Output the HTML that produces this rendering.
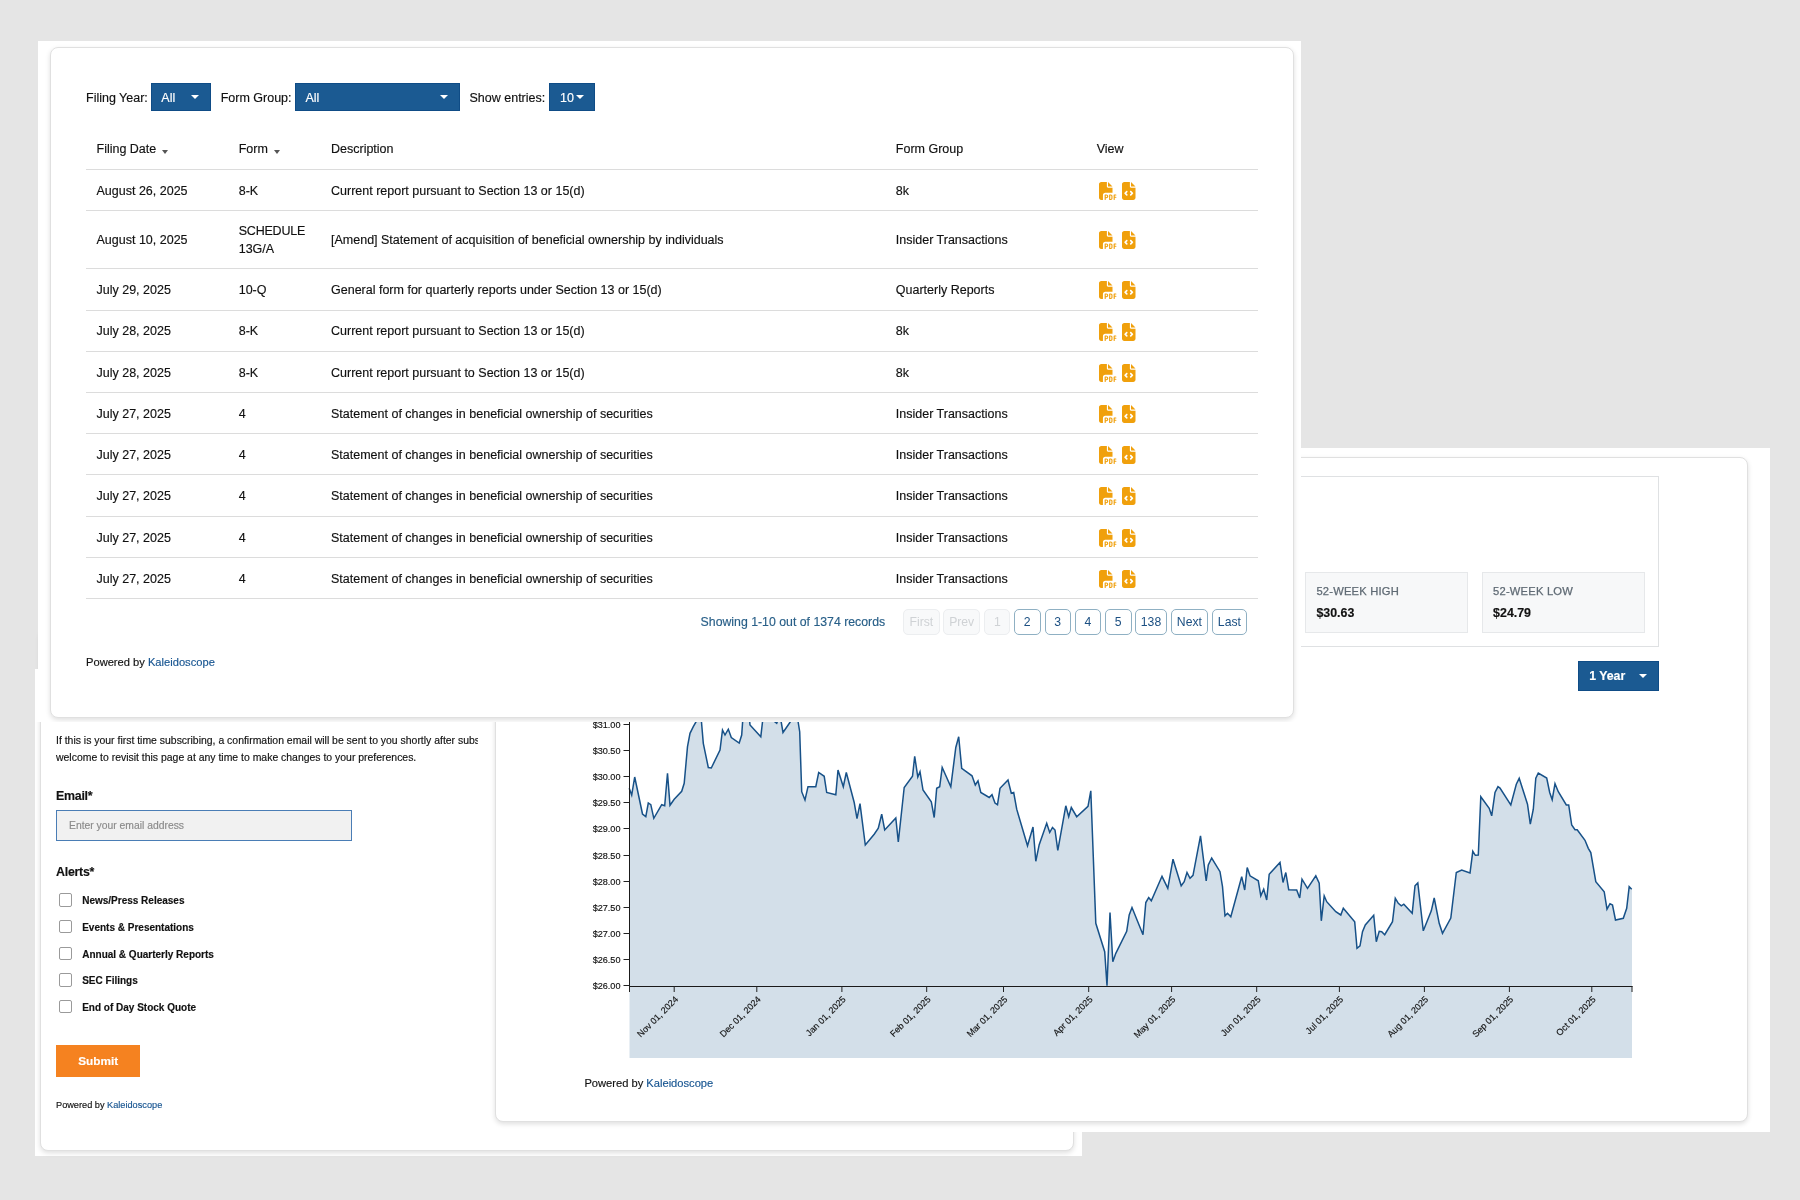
<!DOCTYPE html>
<html><head><meta charset="utf-8"><style>
html,body{margin:0;padding:0;}
body{will-change:transform;width:1800px;height:1200px;background:#e5e5e5;position:relative;overflow:hidden;font-family:"Liberation Sans",sans-serif;}
.panel{position:absolute;background:#fff;}
.card{position:absolute;box-sizing:border-box;border:1px solid #e0e0e0;border-radius:8px;background:#fff;box-shadow:0 2px 5px rgba(0,0,0,0.13);}
.t{position:absolute;white-space:nowrap;line-height:1;-webkit-text-stroke:0.15px currentColor;}
.sel{position:absolute;height:28px;background:#1b5a92;box-sizing:border-box;border:1px solid #0f4c86;}
.caret{position:absolute;width:0;height:0;border-left:4px solid transparent;border-right:4px solid transparent;border-top:4.6px solid #fff;}
.scaret{position:absolute;width:0;height:0;border-left:3.3px solid transparent;border-right:3.3px solid transparent;border-top:4px solid #555;}
.pg{position:absolute;height:24.2px;border-radius:5px;font-size:12.2px;line-height:25.2px;text-align:center;}
</style></head><body>
<div class="panel" style="left:35px;top:669px;width:1047px;height:487px;z-index:1">
<div class="card" style="left:5.3px;top:-40px;width:1033.3px;height:522.3px"></div>
<div class="t" style="left:21px;top:66.55px;font-size:10.45px;color:#111;font-weight:normal;">If this is your first time subscribing, a confirmation email will be sent to you shortly after subscribing. You are</div>
<div class="t" style="left:21px;top:83.75px;font-size:10.45px;color:#111;font-weight:normal;">welcome to revisit this page at any time to make changes to your preferences.</div>
<div class="t" style="left:21px;top:120.70px;font-size:12.4px;color:#111;font-weight:bold;letter-spacing:-0.25px">Email*</div>
<div style="position:absolute;left:21px;top:141px;width:294px;height:29px;border:1px solid #4a7db5;background:#f1f1f1"></div>
<div class="t" style="left:34px;top:152.14px;font-size:10.35px;color:#8a8a8a;font-weight:normal;">Enter your email address</div>
<div class="t" style="left:21px;top:196.80px;font-size:12.4px;color:#111;font-weight:bold;letter-spacing:-0.25px">Alerts*</div>
<div style="position:absolute;left:24.1px;top:224.2px;width:11.2px;height:11.4px;border:1.1px solid #9a9a9a;border-radius:2px;background:#fff"></div>
<div class="t" style="left:47.2px;top:227.34px;font-size:10.0px;color:#111;font-weight:bold;">News/Press Releases</div>
<div style="position:absolute;left:24.1px;top:250.9px;width:11.2px;height:11.4px;border:1.1px solid #9a9a9a;border-radius:2px;background:#fff"></div>
<div class="t" style="left:47.2px;top:254.01px;font-size:10.0px;color:#111;font-weight:bold;">Events &amp; Presentations</div>
<div style="position:absolute;left:24.1px;top:277.5px;width:11.2px;height:11.4px;border:1.1px solid #9a9a9a;border-radius:2px;background:#fff"></div>
<div class="t" style="left:47.2px;top:280.68px;font-size:10.0px;color:#111;font-weight:bold;">Annual &amp; Quarterly Reports</div>
<div style="position:absolute;left:24.1px;top:304.2px;width:11.2px;height:11.4px;border:1.1px solid #9a9a9a;border-radius:2px;background:#fff"></div>
<div class="t" style="left:47.2px;top:307.35px;font-size:10.0px;color:#111;font-weight:bold;">SEC Filings</div>
<div style="position:absolute;left:24.1px;top:330.9px;width:11.2px;height:11.4px;border:1.1px solid #9a9a9a;border-radius:2px;background:#fff"></div>
<div class="t" style="left:47.2px;top:334.02px;font-size:10.0px;color:#111;font-weight:bold;">End of Day Stock Quote</div>
<div style="position:absolute;left:21px;top:376px;width:84px;height:31.5px;background:#f58220"></div>
<div class="t" style="left:43.2px;top:386.81px;font-size:11.8px;color:#fff;font-weight:bold;">Submit</div>
<div class="t" style="left:21px;top:431.61px;font-size:9.2px;color:#111;font-weight:normal;">Powered by <span style="color:#175591">Kaleidoscope</span></div>
</div>
<div class="panel" style="left:478px;top:448px;width:1292px;height:684px;z-index:2">
<div class="card" style="left:17px;top:9px;width:1253px;height:665px"></div>
<div style="position:absolute;left:52px;top:28px;width:1126.5px;height:169px;border:1px solid #dfe1e3"></div>
<div style="position:absolute;left:827px;top:124px;width:161px;height:59px;border:1px solid #e6e8ea;background:#f7f8f9"></div>
<div class="t" style="left:838.4000000000001px;top:137.82px;font-size:11.2px;color:#5f6a74;font-weight:normal;letter-spacing:0.2px;-webkit-text-stroke:0.25px #5f6a74">52-WEEK HIGH</div>
<div class="t" style="left:838.4000000000001px;top:158.70px;font-size:12.4px;color:#111;font-weight:bold;">$30.63</div>
<div style="position:absolute;left:1003.7px;top:124px;width:161px;height:59px;border:1px solid #e6e8ea;background:#f7f8f9"></div>
<div class="t" style="left:1015.1000000000001px;top:137.82px;font-size:11.2px;color:#5f6a74;font-weight:normal;letter-spacing:0.2px;-webkit-text-stroke:0.25px #5f6a74">52-WEEK LOW</div>
<div class="t" style="left:1015.1000000000001px;top:158.70px;font-size:12.4px;color:#111;font-weight:bold;">$24.79</div>
<div style="position:absolute;left:1100px;top:213px;width:80.5px;height:29.6px;background:#1b5a92;box-sizing:border-box;border:1px solid #0f4c86"></div>
<div class="t" style="left:1111.2px;top:222.49px;font-size:12.3px;color:#fff;font-weight:bold;">1 Year</div>
<div class="caret" style="left:1161px;top:226px"></div>
<svg style="position:absolute;left:0;top:0" width="1292" height="684">
<polygon points="151.5,610 151.5,340.3 151.2,340.3 153.7,347.0 156.7,329.0 164.5,366.0 167.8,368.7 170.3,355.0 172.8,356.7 175.8,370.3 183.7,356.7 186.7,357.8 189.5,325.3 192.0,357.3 196.2,351.2 203.7,343.3 206.2,335.3 209.5,298.7 212.0,285.3 215.3,278.7 220.3,270.0 222.8,266.0 225.3,295.3 230.3,319.5 233.3,320.0 242.0,302.0 244.5,282.0 247.0,287.0 250.3,281.2 253.3,289.5 261.2,295.0 263.7,287.0 265.3,264.0 271.2,268.0 272.0,277.0 282.8,288.7 285.3,267.0 292.0,270.0 298.7,275.3 302.0,267.0 305.0,284.5 317.0,267.0 319.5,270.0 321.7,283.7 323.7,343.7 327.0,352.0 330.0,338.7 337.8,338.7 340.7,324.5 346.2,328.3 348.7,344.5 357.8,346.7 360.0,322.0 365.3,338.7 368.3,324.5 376.2,354.5 379.0,370.7 382.0,355.7 387.3,397.0 396.2,386.2 400.3,380.3 403.7,366.2 406.7,382.0 417.8,370.0 420.3,394.0 426.2,339.5 434.5,328.3 436.7,308.3 439.8,329.0 442.0,323.7 445.0,342.0 453.3,353.7 456.2,369.5 458.7,340.3 461.7,338.7 464.2,319.5 472.8,338.7 477.8,299.5 480.7,288.7 483.7,320.3 494.0,327.8 497.3,337.0 500.0,332.8 502.8,344.5 511.2,349.5 514.0,346.7 517.0,355.0 519.5,356.7 522.0,340.3 530.0,332.0 533.3,345.3 535.7,344.5 538.7,361.2 549.5,397.8 555.0,379.0 557.8,413.3 561.2,396.7 568.7,375.3 571.7,384.5 574.5,379.5 577.0,382.0 579.8,402.3 587.8,357.8 590.7,368.7 593.3,359.5 598.7,368.7 610.0,358.3 612.8,342.8 617.8,475.3 626.7,503.7 629.0,537.8 632.0,464.5 634.8,513.7 637.8,505.3 648.7,483.3 651.2,467.0 654.0,459.5 665.0,486.7 667.8,454.5 670.7,449.5 673.3,452.8 684.0,428.3 689.8,440.3 695.0,411.2 703.2,437.8 706.2,433.7 709.0,424.5 712.0,430.3 715.0,427.3 722.5,387.8 728.2,432.8 730.3,417.0 733.7,410.0 742.0,423.7 744.5,438.7 747.0,467.8 749.5,465.3 752.8,468.7 763.7,428.7 766.7,442.0 769.2,419.5 772.0,427.8 780.3,432.8 782.8,447.8 785.7,441.2 788.7,452.0 791.2,426.2 802.0,414.5 805.0,434.5 807.8,424.5 810.7,441.7 818.7,442.0 821.7,450.0 824.0,431.2 829.5,440.3 837.8,427.8 841.2,435.3 843.3,472.8 846.2,447.8 848.7,453.7 857.8,463.7 862.8,467.0 865.3,460.3 876.7,473.7 879.0,500.3 882.0,497.8 884.5,483.7 887.3,477.0 895.7,467.3 898.3,493.7 901.2,483.3 903.7,483.7 906.7,486.7 914.5,473.7 917.3,450.3 920.3,455.3 923.3,457.8 925.8,456.2 934.2,465.3 937.0,437.8 939.8,435.0 945.3,482.8 953.3,462.8 956.2,450.0 961.2,475.3 964.5,485.3 972.8,470.0 978.3,424.5 983.7,422.0 992.0,425.0 994.8,403.3 997.3,407.3 1000.3,407.0 1002.8,348.7 1011.2,360.3 1013.7,367.8 1017.0,344.5 1020.0,338.7 1022.0,340.0 1032.8,357.0 1038.3,336.2 1041.2,330.3 1049.5,356.2 1052.3,376.2 1055.3,361.2 1057.8,330.3 1060.3,325.0 1068.7,330.0 1071.7,344.5 1074.2,351.7 1077.0,335.7 1080.3,343.7 1088.3,357.0 1090.7,357.0 1093.7,377.0 1097.0,381.7 1099.2,381.7 1107.0,392.3 1110.3,400.3 1112.8,404.5 1117.8,433.7 1126.2,443.7 1129.0,461.2 1132.0,455.7 1134.5,457.0 1137.5,472.0 1145.3,470.3 1148.7,460.3 1151.2,438.7 1153.7,441.2 1154.0,441.2 1154.0,610" fill="#d3dfe9"/>
<polyline points="151.2,340.3 153.7,347.0 156.7,329.0 164.5,366.0 167.8,368.7 170.3,355.0 172.8,356.7 175.8,370.3 183.7,356.7 186.7,357.8 189.5,325.3 192.0,357.3 196.2,351.2 203.7,343.3 206.2,335.3 209.5,298.7 212.0,285.3 215.3,278.7 220.3,270.0 222.8,266.0 225.3,295.3 230.3,319.5 233.3,320.0 242.0,302.0 244.5,282.0 247.0,287.0 250.3,281.2 253.3,289.5 261.2,295.0 263.7,287.0 265.3,264.0 271.2,268.0 272.0,277.0 282.8,288.7 285.3,267.0 292.0,270.0 298.7,275.3 302.0,267.0 305.0,284.5 317.0,267.0 319.5,270.0 321.7,283.7 323.7,343.7 327.0,352.0 330.0,338.7 337.8,338.7 340.7,324.5 346.2,328.3 348.7,344.5 357.8,346.7 360.0,322.0 365.3,338.7 368.3,324.5 376.2,354.5 379.0,370.7 382.0,355.7 387.3,397.0 396.2,386.2 400.3,380.3 403.7,366.2 406.7,382.0 417.8,370.0 420.3,394.0 426.2,339.5 434.5,328.3 436.7,308.3 439.8,329.0 442.0,323.7 445.0,342.0 453.3,353.7 456.2,369.5 458.7,340.3 461.7,338.7 464.2,319.5 472.8,338.7 477.8,299.5 480.7,288.7 483.7,320.3 494.0,327.8 497.3,337.0 500.0,332.8 502.8,344.5 511.2,349.5 514.0,346.7 517.0,355.0 519.5,356.7 522.0,340.3 530.0,332.0 533.3,345.3 535.7,344.5 538.7,361.2 549.5,397.8 555.0,379.0 557.8,413.3 561.2,396.7 568.7,375.3 571.7,384.5 574.5,379.5 577.0,382.0 579.8,402.3 587.8,357.8 590.7,368.7 593.3,359.5 598.7,368.7 610.0,358.3 612.8,342.8 617.8,475.3 626.7,503.7 629.0,537.8 632.0,464.5 634.8,513.7 637.8,505.3 648.7,483.3 651.2,467.0 654.0,459.5 665.0,486.7 667.8,454.5 670.7,449.5 673.3,452.8 684.0,428.3 689.8,440.3 695.0,411.2 703.2,437.8 706.2,433.7 709.0,424.5 712.0,430.3 715.0,427.3 722.5,387.8 728.2,432.8 730.3,417.0 733.7,410.0 742.0,423.7 744.5,438.7 747.0,467.8 749.5,465.3 752.8,468.7 763.7,428.7 766.7,442.0 769.2,419.5 772.0,427.8 780.3,432.8 782.8,447.8 785.7,441.2 788.7,452.0 791.2,426.2 802.0,414.5 805.0,434.5 807.8,424.5 810.7,441.7 818.7,442.0 821.7,450.0 824.0,431.2 829.5,440.3 837.8,427.8 841.2,435.3 843.3,472.8 846.2,447.8 848.7,453.7 857.8,463.7 862.8,467.0 865.3,460.3 876.7,473.7 879.0,500.3 882.0,497.8 884.5,483.7 887.3,477.0 895.7,467.3 898.3,493.7 901.2,483.3 903.7,483.7 906.7,486.7 914.5,473.7 917.3,450.3 920.3,455.3 923.3,457.8 925.8,456.2 934.2,465.3 937.0,437.8 939.8,435.0 945.3,482.8 953.3,462.8 956.2,450.0 961.2,475.3 964.5,485.3 972.8,470.0 978.3,424.5 983.7,422.0 992.0,425.0 994.8,403.3 997.3,407.3 1000.3,407.0 1002.8,348.7 1011.2,360.3 1013.7,367.8 1017.0,344.5 1020.0,338.7 1022.0,340.0 1032.8,357.0 1038.3,336.2 1041.2,330.3 1049.5,356.2 1052.3,376.2 1055.3,361.2 1057.8,330.3 1060.3,325.0 1068.7,330.0 1071.7,344.5 1074.2,351.7 1077.0,335.7 1080.3,343.7 1088.3,357.0 1090.7,357.0 1093.7,377.0 1097.0,381.7 1099.2,381.7 1107.0,392.3 1110.3,400.3 1112.8,404.5 1117.8,433.7 1126.2,443.7 1129.0,461.2 1132.0,455.7 1134.5,457.0 1137.5,472.0 1145.3,470.3 1148.7,460.3 1151.2,438.7 1153.7,441.2" fill="none" stroke="#175188" stroke-width="1.5" stroke-linejoin="miter"/>
<line x1="151.5" y1="270" x2="151.5" y2="539" stroke="#1a1a1a" stroke-width="1"/>
<line x1="145.5" y1="276.5" x2="151.5" y2="276.5" stroke="#222" stroke-width="1"/>
<text x="142.5" y="279.7" text-anchor="end" font-family="Liberation Sans" font-size="9.1" fill="#111" stroke="#111" stroke-width="0.15">$31.00</text>
<line x1="145.5" y1="302.5" x2="151.5" y2="302.5" stroke="#222" stroke-width="1"/>
<text x="142.5" y="305.7" text-anchor="end" font-family="Liberation Sans" font-size="9.1" fill="#111" stroke="#111" stroke-width="0.15">$30.50</text>
<line x1="145.5" y1="328.5" x2="151.5" y2="328.5" stroke="#222" stroke-width="1"/>
<text x="142.5" y="331.7" text-anchor="end" font-family="Liberation Sans" font-size="9.1" fill="#111" stroke="#111" stroke-width="0.15">$30.00</text>
<line x1="145.5" y1="354.5" x2="151.5" y2="354.5" stroke="#222" stroke-width="1"/>
<text x="142.5" y="357.7" text-anchor="end" font-family="Liberation Sans" font-size="9.1" fill="#111" stroke="#111" stroke-width="0.15">$29.50</text>
<line x1="145.5" y1="380.5" x2="151.5" y2="380.5" stroke="#222" stroke-width="1"/>
<text x="142.5" y="383.7" text-anchor="end" font-family="Liberation Sans" font-size="9.1" fill="#111" stroke="#111" stroke-width="0.15">$29.00</text>
<line x1="145.5" y1="407.5" x2="151.5" y2="407.5" stroke="#222" stroke-width="1"/>
<text x="142.5" y="410.7" text-anchor="end" font-family="Liberation Sans" font-size="9.1" fill="#111" stroke="#111" stroke-width="0.15">$28.50</text>
<line x1="145.5" y1="433.5" x2="151.5" y2="433.5" stroke="#222" stroke-width="1"/>
<text x="142.5" y="436.7" text-anchor="end" font-family="Liberation Sans" font-size="9.1" fill="#111" stroke="#111" stroke-width="0.15">$28.00</text>
<line x1="145.5" y1="459.5" x2="151.5" y2="459.5" stroke="#222" stroke-width="1"/>
<text x="142.5" y="462.7" text-anchor="end" font-family="Liberation Sans" font-size="9.1" fill="#111" stroke="#111" stroke-width="0.15">$27.50</text>
<line x1="145.5" y1="485.5" x2="151.5" y2="485.5" stroke="#222" stroke-width="1"/>
<text x="142.5" y="488.7" text-anchor="end" font-family="Liberation Sans" font-size="9.1" fill="#111" stroke="#111" stroke-width="0.15">$27.00</text>
<line x1="145.5" y1="511.5" x2="151.5" y2="511.5" stroke="#222" stroke-width="1"/>
<text x="142.5" y="514.7" text-anchor="end" font-family="Liberation Sans" font-size="9.1" fill="#111" stroke="#111" stroke-width="0.15">$26.50</text>
<line x1="145.5" y1="537.5" x2="151.5" y2="537.5" stroke="#222" stroke-width="1"/>
<text x="142.5" y="540.7" text-anchor="end" font-family="Liberation Sans" font-size="9.1" fill="#111" stroke="#111" stroke-width="0.15">$26.00</text>
<line x1="151.5" y1="538.5" x2="1154.5" y2="538.5" stroke="#1a1a1a" stroke-width="1"/>
<line x1="1154" y1="538" x2="1154" y2="544" stroke="#222" stroke-width="1"/>
<line x1="151.5" y1="538" x2="151.5" y2="544" stroke="#222" stroke-width="1"/>
<line x1="196.2" y1="538" x2="196.2" y2="544" stroke="#222" stroke-width="1"/>
<text transform="translate(200.7,552) rotate(-45)" text-anchor="end" font-family="Liberation Sans" font-size="9.0" fill="#111" stroke="#111" stroke-width="0.15">Nov 01, 2024</text>
<line x1="278.8" y1="538" x2="278.8" y2="544" stroke="#222" stroke-width="1"/>
<text transform="translate(283.3,552) rotate(-45)" text-anchor="end" font-family="Liberation Sans" font-size="9.0" fill="#111" stroke="#111" stroke-width="0.15">Dec 01, 2024</text>
<line x1="363.9" y1="538" x2="363.9" y2="544" stroke="#222" stroke-width="1"/>
<text transform="translate(368.4,552) rotate(-45)" text-anchor="end" font-family="Liberation Sans" font-size="9.0" fill="#111" stroke="#111" stroke-width="0.15">Jan 01, 2025</text>
<line x1="448.7" y1="538" x2="448.7" y2="544" stroke="#222" stroke-width="1"/>
<text transform="translate(453.2,552) rotate(-45)" text-anchor="end" font-family="Liberation Sans" font-size="9.0" fill="#111" stroke="#111" stroke-width="0.15">Feb 01, 2025</text>
<line x1="525.5" y1="538" x2="525.5" y2="544" stroke="#222" stroke-width="1"/>
<text transform="translate(530.0,552) rotate(-45)" text-anchor="end" font-family="Liberation Sans" font-size="9.0" fill="#111" stroke="#111" stroke-width="0.15">Mar 01, 2025</text>
<line x1="610.7" y1="538" x2="610.7" y2="544" stroke="#222" stroke-width="1"/>
<text transform="translate(615.2,552) rotate(-45)" text-anchor="end" font-family="Liberation Sans" font-size="9.0" fill="#111" stroke="#111" stroke-width="0.15">Apr 01, 2025</text>
<line x1="693.6" y1="538" x2="693.6" y2="544" stroke="#222" stroke-width="1"/>
<text transform="translate(698.1,552) rotate(-45)" text-anchor="end" font-family="Liberation Sans" font-size="9.0" fill="#111" stroke="#111" stroke-width="0.15">May 01, 2025</text>
<line x1="778.7" y1="538" x2="778.7" y2="544" stroke="#222" stroke-width="1"/>
<text transform="translate(783.2,552) rotate(-45)" text-anchor="end" font-family="Liberation Sans" font-size="9.0" fill="#111" stroke="#111" stroke-width="0.15">Jun 01, 2025</text>
<line x1="861.4" y1="538" x2="861.4" y2="544" stroke="#222" stroke-width="1"/>
<text transform="translate(865.9,552) rotate(-45)" text-anchor="end" font-family="Liberation Sans" font-size="9.0" fill="#111" stroke="#111" stroke-width="0.15">Jul 01, 2025</text>
<line x1="946.4" y1="538" x2="946.4" y2="544" stroke="#222" stroke-width="1"/>
<text transform="translate(950.9,552) rotate(-45)" text-anchor="end" font-family="Liberation Sans" font-size="9.0" fill="#111" stroke="#111" stroke-width="0.15">Aug 01, 2025</text>
<line x1="1031.4" y1="538" x2="1031.4" y2="544" stroke="#222" stroke-width="1"/>
<text transform="translate(1035.9,552) rotate(-45)" text-anchor="end" font-family="Liberation Sans" font-size="9.0" fill="#111" stroke="#111" stroke-width="0.15">Sep 01, 2025</text>
<line x1="1113.8" y1="538" x2="1113.8" y2="544" stroke="#222" stroke-width="1"/>
<text transform="translate(1118.3,552) rotate(-45)" text-anchor="end" font-family="Liberation Sans" font-size="9.0" fill="#111" stroke="#111" stroke-width="0.15">Oct 01, 2025</text>
</svg>
<div class="t" style="left:106.39999999999998px;top:630.36px;font-size:11.15px;color:#111;font-weight:normal;">Powered by <span style="color:#175591">Kaleidoscope</span></div>
</div>
<div style="position:absolute;left:35px;top:41px;width:1266px;height:681px;overflow:hidden;z-index:3"><div style="position:absolute;left:3px;top:0;width:1263px;height:628px;background:#fff"></div><div style="position:absolute;left:0;top:628px;width:1266px;height:53px;background:#fff"></div>
<div class="panel" style="left:3px;top:0px;width:1263px;height:681px;background:transparent">
<div class="card" style="left:11.6px;top:6px;width:1244.4px;height:670.5px"></div>
<div class="t" style="left:48px;top:50.92px;font-size:12.5px;color:#111;font-weight:normal;">Filing Year:</div>
<div class="sel" style="left:113px;top:42px;width:60px"></div>
<div class="t" style="left:123.30000000000001px;top:50.92px;font-size:12.5px;color:#fff;font-weight:normal;">All</div>
<div class="caret" style="left:153px;top:54px"></div>
<div class="t" style="left:182.7px;top:50.92px;font-size:12.5px;color:#111;font-weight:normal;">Form Group:</div>
<div class="sel" style="left:257px;top:42px;width:165px"></div>
<div class="t" style="left:267.5px;top:50.92px;font-size:12.5px;color:#fff;font-weight:normal;">All</div>
<div class="caret" style="left:402px;top:54px"></div>
<div class="t" style="left:431.5px;top:50.92px;font-size:12.5px;color:#111;font-weight:normal;">Show entries:</div>
<div class="sel" style="left:511.25px;top:42px;width:46px"></div>
<div class="t" style="left:522px;top:50.92px;font-size:12.5px;color:#fff;font-weight:normal;">10</div>
<div class="caret" style="left:537.5px;top:54px"></div>
<div class="t" style="left:58.5px;top:102.02px;font-size:12.5px;color:#111;font-weight:normal;">Filing Date</div>
<div class="t" style="left:200.7px;top:102.02px;font-size:12.5px;color:#111;font-weight:normal;">Form</div>
<div class="t" style="left:293px;top:102.02px;font-size:12.5px;color:#111;font-weight:normal;">Description</div>
<div class="t" style="left:857.8px;top:102.02px;font-size:12.5px;color:#111;font-weight:normal;">Form Group</div>
<div class="t" style="left:1058.7px;top:102.02px;font-size:12.5px;color:#111;font-weight:normal;">View</div>
<div class="scaret" style="left:123.5px;top:109.30000000000001px"></div>
<div class="scaret" style="left:235.5px;top:109.30000000000001px"></div>
<div style="position:absolute;left:48px;top:127.80px;width:1172px;height:1px;background:#dcdcdc"></div>
<div style="position:absolute;left:48px;top:169.10px;width:1172px;height:1px;background:#dcdcdc"></div>
<div style="position:absolute;left:48px;top:227.10px;width:1172px;height:1px;background:#dcdcdc"></div>
<div style="position:absolute;left:48px;top:268.80px;width:1172px;height:1px;background:#dcdcdc"></div>
<div style="position:absolute;left:48px;top:309.80px;width:1172px;height:1px;background:#dcdcdc"></div>
<div style="position:absolute;left:48px;top:351.25px;width:1172px;height:1px;background:#dcdcdc"></div>
<div style="position:absolute;left:48px;top:392.40px;width:1172px;height:1px;background:#dcdcdc"></div>
<div style="position:absolute;left:48px;top:433.10px;width:1172px;height:1px;background:#dcdcdc"></div>
<div style="position:absolute;left:48px;top:474.80px;width:1172px;height:1px;background:#dcdcdc"></div>
<div style="position:absolute;left:48px;top:516.00px;width:1172px;height:1px;background:#dcdcdc"></div>
<div style="position:absolute;left:48px;top:557.20px;width:1172px;height:1px;background:#dcdcdc"></div>
<div class="t" style="left:58.5px;top:143.62px;font-size:12.5px;color:#111;font-weight:normal;">August 26, 2025</div>
<div class="t" style="left:200.7px;top:143.62px;font-size:12.5px;color:#111;font-weight:normal;">8-K</div>
<div class="t" style="left:293px;top:143.62px;font-size:12.5px;color:#111;font-weight:normal;">Current report pursuant to Section 13 or 15(d)</div>
<div class="t" style="left:857.8px;top:143.62px;font-size:12.5px;color:#111;font-weight:normal;">8k</div>
<div style="position:absolute;left:1060.8px;top:140.65px"><svg width="18" height="18" viewBox="0 0 512 512" style="display:block"><path fill="#f0a00c" d="M0 64C0 28.7 28.7 0 64 0H224V128c0 17.7 14.3 32 32 32H384V304H176c-35.3 0-64 28.7-64 64V512H64c-35.3 0-64-28.7-64-64V64zM384 128H256V0L384 128zM176 352h32c30.9 0 56 25.1 56 56s-25.1 56-56 56H192v32c0 8.8-7.2 16-16 16s-16-7.2-16-16V448 368c0-8.8 7.2-16 16-16zm32 80c13.3 0 24-10.7 24-24s-10.7-24-24-24H192v48h16zm96-80h32c26.5 0 48 21.5 48 48v64c0 26.5-21.5 48-48 48H304c-8.8 0-16-7.2-16-16V368c0-8.8 7.2-16 16-16zm32 128c8.8 0 16-7.2 16-16V400c0-8.8-7.2-16-16-16H320v96h16zm80-112c0-8.8 7.2-16 16-16h48c8.8 0 16 7.2 16 16s-7.2 16-16 16H448v32h32c8.8 0 16 7.2 16 16s-7.2 16-16 16H448v48c0 8.8-7.2 16-16 16s-16-7.2-16-16V432 368z"/></svg></div>
<div style="position:absolute;left:1084.1px;top:140.65px"><svg width="13.5" height="18" viewBox="0 0 384 512" style="display:block"><path fill="#f0a00c" d="M64 0C28.7 0 0 28.7 0 64V448c0 35.3 28.7 64 64 64H320c35.3 0 64-28.7 64-64V160H256c-17.7 0-32-14.3-32-32V0H64zM256 0V128H384L256 0zM153 289l-31 31 31 31c9.4 9.4 9.4 24.6 0 33.9s-24.6 9.4-33.9 0L71 337c-9.4-9.4-9.4-24.6 0-33.9l48-48c9.4-9.4 24.6-9.4 33.9 0s9.4 24.6 0 33.9zM265 255l48 48c9.4 9.4 9.4 24.6 0 33.9l-48 48c-9.4 9.4-24.6 9.4-33.9 0s-9.4-24.6 0-33.9l31-31-31-31c-9.4-9.4-9.4-24.6 0-33.9s24.6-9.4 33.9 0z"/></svg></div>
<div class="t" style="left:58.5px;top:193.27px;font-size:12.5px;color:#111;font-weight:normal;">August 10, 2025</div>
<div class="t" style="left:200.7px;top:183.87px;font-size:12.5px;color:#111;font-weight:normal;letter-spacing:-0.2px">SCHEDULE</div>
<div class="t" style="left:200.7px;top:201.97px;font-size:12.5px;color:#111;font-weight:normal;">13G/A</div>
<div class="t" style="left:293px;top:193.27px;font-size:12.5px;color:#111;font-weight:normal;">[Amend] Statement of acquisition of beneficial ownership by individuals</div>
<div class="t" style="left:857.8px;top:193.27px;font-size:12.5px;color:#111;font-weight:normal;">Insider Transactions</div>
<div style="position:absolute;left:1060.8px;top:190.30px"><svg width="18" height="18" viewBox="0 0 512 512" style="display:block"><path fill="#f0a00c" d="M0 64C0 28.7 28.7 0 64 0H224V128c0 17.7 14.3 32 32 32H384V304H176c-35.3 0-64 28.7-64 64V512H64c-35.3 0-64-28.7-64-64V64zM384 128H256V0L384 128zM176 352h32c30.9 0 56 25.1 56 56s-25.1 56-56 56H192v32c0 8.8-7.2 16-16 16s-16-7.2-16-16V448 368c0-8.8 7.2-16 16-16zm32 80c13.3 0 24-10.7 24-24s-10.7-24-24-24H192v48h16zm96-80h32c26.5 0 48 21.5 48 48v64c0 26.5-21.5 48-48 48H304c-8.8 0-16-7.2-16-16V368c0-8.8 7.2-16 16-16zm32 128c8.8 0 16-7.2 16-16V400c0-8.8-7.2-16-16-16H320v96h16zm80-112c0-8.8 7.2-16 16-16h48c8.8 0 16 7.2 16 16s-7.2 16-16 16H448v32h32c8.8 0 16 7.2 16 16s-7.2 16-16 16H448v48c0 8.8-7.2 16-16 16s-16-7.2-16-16V432 368z"/></svg></div>
<div style="position:absolute;left:1084.1px;top:190.30px"><svg width="13.5" height="18" viewBox="0 0 384 512" style="display:block"><path fill="#f0a00c" d="M64 0C28.7 0 0 28.7 0 64V448c0 35.3 28.7 64 64 64H320c35.3 0 64-28.7 64-64V160H256c-17.7 0-32-14.3-32-32V0H64zM256 0V128H384L256 0zM153 289l-31 31 31 31c9.4 9.4 9.4 24.6 0 33.9s-24.6 9.4-33.9 0L71 337c-9.4-9.4-9.4-24.6 0-33.9l48-48c9.4-9.4 24.6-9.4 33.9 0s9.4 24.6 0 33.9zM265 255l48 48c9.4 9.4 9.4 24.6 0 33.9l-48 48c-9.4 9.4-24.6 9.4-33.9 0s-9.4-24.6 0-33.9l31-31-31-31c-9.4-9.4-9.4-24.6 0-33.9s24.6-9.4 33.9 0z"/></svg></div>
<div class="t" style="left:58.5px;top:243.12px;font-size:12.5px;color:#111;font-weight:normal;">July 29, 2025</div>
<div class="t" style="left:200.7px;top:243.12px;font-size:12.5px;color:#111;font-weight:normal;">10-Q</div>
<div class="t" style="left:293px;top:243.12px;font-size:12.5px;color:#111;font-weight:normal;">General form for quarterly reports under Section 13 or 15(d)</div>
<div class="t" style="left:857.8px;top:243.12px;font-size:12.5px;color:#111;font-weight:normal;">Quarterly Reports</div>
<div style="position:absolute;left:1060.8px;top:240.15px"><svg width="18" height="18" viewBox="0 0 512 512" style="display:block"><path fill="#f0a00c" d="M0 64C0 28.7 28.7 0 64 0H224V128c0 17.7 14.3 32 32 32H384V304H176c-35.3 0-64 28.7-64 64V512H64c-35.3 0-64-28.7-64-64V64zM384 128H256V0L384 128zM176 352h32c30.9 0 56 25.1 56 56s-25.1 56-56 56H192v32c0 8.8-7.2 16-16 16s-16-7.2-16-16V448 368c0-8.8 7.2-16 16-16zm32 80c13.3 0 24-10.7 24-24s-10.7-24-24-24H192v48h16zm96-80h32c26.5 0 48 21.5 48 48v64c0 26.5-21.5 48-48 48H304c-8.8 0-16-7.2-16-16V368c0-8.8 7.2-16 16-16zm32 128c8.8 0 16-7.2 16-16V400c0-8.8-7.2-16-16-16H320v96h16zm80-112c0-8.8 7.2-16 16-16h48c8.8 0 16 7.2 16 16s-7.2 16-16 16H448v32h32c8.8 0 16 7.2 16 16s-7.2 16-16 16H448v48c0 8.8-7.2 16-16 16s-16-7.2-16-16V432 368z"/></svg></div>
<div style="position:absolute;left:1084.1px;top:240.15px"><svg width="13.5" height="18" viewBox="0 0 384 512" style="display:block"><path fill="#f0a00c" d="M64 0C28.7 0 0 28.7 0 64V448c0 35.3 28.7 64 64 64H320c35.3 0 64-28.7 64-64V160H256c-17.7 0-32-14.3-32-32V0H64zM256 0V128H384L256 0zM153 289l-31 31 31 31c9.4 9.4 9.4 24.6 0 33.9s-24.6 9.4-33.9 0L71 337c-9.4-9.4-9.4-24.6 0-33.9l48-48c9.4-9.4 24.6-9.4 33.9 0s9.4 24.6 0 33.9zM265 255l48 48c9.4 9.4 9.4 24.6 0 33.9l-48 48c-9.4 9.4-24.6 9.4-33.9 0s-9.4-24.6 0-33.9l31-31-31-31c-9.4-9.4-9.4-24.6 0-33.9s24.6-9.4 33.9 0z"/></svg></div>
<div class="t" style="left:58.5px;top:284.47px;font-size:12.5px;color:#111;font-weight:normal;">July 28, 2025</div>
<div class="t" style="left:200.7px;top:284.47px;font-size:12.5px;color:#111;font-weight:normal;">8-K</div>
<div class="t" style="left:293px;top:284.47px;font-size:12.5px;color:#111;font-weight:normal;">Current report pursuant to Section 13 or 15(d)</div>
<div class="t" style="left:857.8px;top:284.47px;font-size:12.5px;color:#111;font-weight:normal;">8k</div>
<div style="position:absolute;left:1060.8px;top:281.50px"><svg width="18" height="18" viewBox="0 0 512 512" style="display:block"><path fill="#f0a00c" d="M0 64C0 28.7 28.7 0 64 0H224V128c0 17.7 14.3 32 32 32H384V304H176c-35.3 0-64 28.7-64 64V512H64c-35.3 0-64-28.7-64-64V64zM384 128H256V0L384 128zM176 352h32c30.9 0 56 25.1 56 56s-25.1 56-56 56H192v32c0 8.8-7.2 16-16 16s-16-7.2-16-16V448 368c0-8.8 7.2-16 16-16zm32 80c13.3 0 24-10.7 24-24s-10.7-24-24-24H192v48h16zm96-80h32c26.5 0 48 21.5 48 48v64c0 26.5-21.5 48-48 48H304c-8.8 0-16-7.2-16-16V368c0-8.8 7.2-16 16-16zm32 128c8.8 0 16-7.2 16-16V400c0-8.8-7.2-16-16-16H320v96h16zm80-112c0-8.8 7.2-16 16-16h48c8.8 0 16 7.2 16 16s-7.2 16-16 16H448v32h32c8.8 0 16 7.2 16 16s-7.2 16-16 16H448v48c0 8.8-7.2 16-16 16s-16-7.2-16-16V432 368z"/></svg></div>
<div style="position:absolute;left:1084.1px;top:281.50px"><svg width="13.5" height="18" viewBox="0 0 384 512" style="display:block"><path fill="#f0a00c" d="M64 0C28.7 0 0 28.7 0 64V448c0 35.3 28.7 64 64 64H320c35.3 0 64-28.7 64-64V160H256c-17.7 0-32-14.3-32-32V0H64zM256 0V128H384L256 0zM153 289l-31 31 31 31c9.4 9.4 9.4 24.6 0 33.9s-24.6 9.4-33.9 0L71 337c-9.4-9.4-9.4-24.6 0-33.9l48-48c9.4-9.4 24.6-9.4 33.9 0s9.4 24.6 0 33.9zM265 255l48 48c9.4 9.4 9.4 24.6 0 33.9l-48 48c-9.4 9.4-24.6 9.4-33.9 0s-9.4-24.6 0-33.9l31-31-31-31c-9.4-9.4-9.4-24.6 0-33.9s24.6-9.4 33.9 0z"/></svg></div>
<div class="t" style="left:58.5px;top:325.69px;font-size:12.5px;color:#111;font-weight:normal;">July 28, 2025</div>
<div class="t" style="left:200.7px;top:325.69px;font-size:12.5px;color:#111;font-weight:normal;">8-K</div>
<div class="t" style="left:293px;top:325.69px;font-size:12.5px;color:#111;font-weight:normal;">Current report pursuant to Section 13 or 15(d)</div>
<div class="t" style="left:857.8px;top:325.69px;font-size:12.5px;color:#111;font-weight:normal;">8k</div>
<div style="position:absolute;left:1060.8px;top:322.72px"><svg width="18" height="18" viewBox="0 0 512 512" style="display:block"><path fill="#f0a00c" d="M0 64C0 28.7 28.7 0 64 0H224V128c0 17.7 14.3 32 32 32H384V304H176c-35.3 0-64 28.7-64 64V512H64c-35.3 0-64-28.7-64-64V64zM384 128H256V0L384 128zM176 352h32c30.9 0 56 25.1 56 56s-25.1 56-56 56H192v32c0 8.8-7.2 16-16 16s-16-7.2-16-16V448 368c0-8.8 7.2-16 16-16zm32 80c13.3 0 24-10.7 24-24s-10.7-24-24-24H192v48h16zm96-80h32c26.5 0 48 21.5 48 48v64c0 26.5-21.5 48-48 48H304c-8.8 0-16-7.2-16-16V368c0-8.8 7.2-16 16-16zm32 128c8.8 0 16-7.2 16-16V400c0-8.8-7.2-16-16-16H320v96h16zm80-112c0-8.8 7.2-16 16-16h48c8.8 0 16 7.2 16 16s-7.2 16-16 16H448v32h32c8.8 0 16 7.2 16 16s-7.2 16-16 16H448v48c0 8.8-7.2 16-16 16s-16-7.2-16-16V432 368z"/></svg></div>
<div style="position:absolute;left:1084.1px;top:322.72px"><svg width="13.5" height="18" viewBox="0 0 384 512" style="display:block"><path fill="#f0a00c" d="M64 0C28.7 0 0 28.7 0 64V448c0 35.3 28.7 64 64 64H320c35.3 0 64-28.7 64-64V160H256c-17.7 0-32-14.3-32-32V0H64zM256 0V128H384L256 0zM153 289l-31 31 31 31c9.4 9.4 9.4 24.6 0 33.9s-24.6 9.4-33.9 0L71 337c-9.4-9.4-9.4-24.6 0-33.9l48-48c9.4-9.4 24.6-9.4 33.9 0s9.4 24.6 0 33.9zM265 255l48 48c9.4 9.4 9.4 24.6 0 33.9l-48 48c-9.4 9.4-24.6 9.4-33.9 0s-9.4-24.6 0-33.9l31-31-31-31c-9.4-9.4-9.4-24.6 0-33.9s24.6-9.4 33.9 0z"/></svg></div>
<div class="t" style="left:58.5px;top:366.99px;font-size:12.5px;color:#111;font-weight:normal;">July 27, 2025</div>
<div class="t" style="left:200.7px;top:366.99px;font-size:12.5px;color:#111;font-weight:normal;">4</div>
<div class="t" style="left:293px;top:366.99px;font-size:12.5px;color:#111;font-weight:normal;">Statement of changes in beneficial ownership of securities</div>
<div class="t" style="left:857.8px;top:366.99px;font-size:12.5px;color:#111;font-weight:normal;">Insider Transactions</div>
<div style="position:absolute;left:1060.8px;top:364.02px"><svg width="18" height="18" viewBox="0 0 512 512" style="display:block"><path fill="#f0a00c" d="M0 64C0 28.7 28.7 0 64 0H224V128c0 17.7 14.3 32 32 32H384V304H176c-35.3 0-64 28.7-64 64V512H64c-35.3 0-64-28.7-64-64V64zM384 128H256V0L384 128zM176 352h32c30.9 0 56 25.1 56 56s-25.1 56-56 56H192v32c0 8.8-7.2 16-16 16s-16-7.2-16-16V448 368c0-8.8 7.2-16 16-16zm32 80c13.3 0 24-10.7 24-24s-10.7-24-24-24H192v48h16zm96-80h32c26.5 0 48 21.5 48 48v64c0 26.5-21.5 48-48 48H304c-8.8 0-16-7.2-16-16V368c0-8.8 7.2-16 16-16zm32 128c8.8 0 16-7.2 16-16V400c0-8.8-7.2-16-16-16H320v96h16zm80-112c0-8.8 7.2-16 16-16h48c8.8 0 16 7.2 16 16s-7.2 16-16 16H448v32h32c8.8 0 16 7.2 16 16s-7.2 16-16 16H448v48c0 8.8-7.2 16-16 16s-16-7.2-16-16V432 368z"/></svg></div>
<div style="position:absolute;left:1084.1px;top:364.02px"><svg width="13.5" height="18" viewBox="0 0 384 512" style="display:block"><path fill="#f0a00c" d="M64 0C28.7 0 0 28.7 0 64V448c0 35.3 28.7 64 64 64H320c35.3 0 64-28.7 64-64V160H256c-17.7 0-32-14.3-32-32V0H64zM256 0V128H384L256 0zM153 289l-31 31 31 31c9.4 9.4 9.4 24.6 0 33.9s-24.6 9.4-33.9 0L71 337c-9.4-9.4-9.4-24.6 0-33.9l48-48c9.4-9.4 24.6-9.4 33.9 0s9.4 24.6 0 33.9zM265 255l48 48c9.4 9.4 9.4 24.6 0 33.9l-48 48c-9.4 9.4-24.6 9.4-33.9 0s-9.4-24.6 0-33.9l31-31-31-31c-9.4-9.4-9.4-24.6 0-33.9s24.6-9.4 33.9 0z"/></svg></div>
<div class="t" style="left:58.5px;top:407.92px;font-size:12.5px;color:#111;font-weight:normal;">July 27, 2025</div>
<div class="t" style="left:200.7px;top:407.92px;font-size:12.5px;color:#111;font-weight:normal;">4</div>
<div class="t" style="left:293px;top:407.92px;font-size:12.5px;color:#111;font-weight:normal;">Statement of changes in beneficial ownership of securities</div>
<div class="t" style="left:857.8px;top:407.92px;font-size:12.5px;color:#111;font-weight:normal;">Insider Transactions</div>
<div style="position:absolute;left:1060.8px;top:404.95px"><svg width="18" height="18" viewBox="0 0 512 512" style="display:block"><path fill="#f0a00c" d="M0 64C0 28.7 28.7 0 64 0H224V128c0 17.7 14.3 32 32 32H384V304H176c-35.3 0-64 28.7-64 64V512H64c-35.3 0-64-28.7-64-64V64zM384 128H256V0L384 128zM176 352h32c30.9 0 56 25.1 56 56s-25.1 56-56 56H192v32c0 8.8-7.2 16-16 16s-16-7.2-16-16V448 368c0-8.8 7.2-16 16-16zm32 80c13.3 0 24-10.7 24-24s-10.7-24-24-24H192v48h16zm96-80h32c26.5 0 48 21.5 48 48v64c0 26.5-21.5 48-48 48H304c-8.8 0-16-7.2-16-16V368c0-8.8 7.2-16 16-16zm32 128c8.8 0 16-7.2 16-16V400c0-8.8-7.2-16-16-16H320v96h16zm80-112c0-8.8 7.2-16 16-16h48c8.8 0 16 7.2 16 16s-7.2 16-16 16H448v32h32c8.8 0 16 7.2 16 16s-7.2 16-16 16H448v48c0 8.8-7.2 16-16 16s-16-7.2-16-16V432 368z"/></svg></div>
<div style="position:absolute;left:1084.1px;top:404.95px"><svg width="13.5" height="18" viewBox="0 0 384 512" style="display:block"><path fill="#f0a00c" d="M64 0C28.7 0 0 28.7 0 64V448c0 35.3 28.7 64 64 64H320c35.3 0 64-28.7 64-64V160H256c-17.7 0-32-14.3-32-32V0H64zM256 0V128H384L256 0zM153 289l-31 31 31 31c9.4 9.4 9.4 24.6 0 33.9s-24.6 9.4-33.9 0L71 337c-9.4-9.4-9.4-24.6 0-33.9l48-48c9.4-9.4 24.6-9.4 33.9 0s9.4 24.6 0 33.9zM265 255l48 48c9.4 9.4 9.4 24.6 0 33.9l-48 48c-9.4 9.4-24.6 9.4-33.9 0s-9.4-24.6 0-33.9l31-31-31-31c-9.4-9.4-9.4-24.6 0-33.9s24.6-9.4 33.9 0z"/></svg></div>
<div class="t" style="left:58.5px;top:449.12px;font-size:12.5px;color:#111;font-weight:normal;">July 27, 2025</div>
<div class="t" style="left:200.7px;top:449.12px;font-size:12.5px;color:#111;font-weight:normal;">4</div>
<div class="t" style="left:293px;top:449.12px;font-size:12.5px;color:#111;font-weight:normal;">Statement of changes in beneficial ownership of securities</div>
<div class="t" style="left:857.8px;top:449.12px;font-size:12.5px;color:#111;font-weight:normal;">Insider Transactions</div>
<div style="position:absolute;left:1060.8px;top:446.15px"><svg width="18" height="18" viewBox="0 0 512 512" style="display:block"><path fill="#f0a00c" d="M0 64C0 28.7 28.7 0 64 0H224V128c0 17.7 14.3 32 32 32H384V304H176c-35.3 0-64 28.7-64 64V512H64c-35.3 0-64-28.7-64-64V64zM384 128H256V0L384 128zM176 352h32c30.9 0 56 25.1 56 56s-25.1 56-56 56H192v32c0 8.8-7.2 16-16 16s-16-7.2-16-16V448 368c0-8.8 7.2-16 16-16zm32 80c13.3 0 24-10.7 24-24s-10.7-24-24-24H192v48h16zm96-80h32c26.5 0 48 21.5 48 48v64c0 26.5-21.5 48-48 48H304c-8.8 0-16-7.2-16-16V368c0-8.8 7.2-16 16-16zm32 128c8.8 0 16-7.2 16-16V400c0-8.8-7.2-16-16-16H320v96h16zm80-112c0-8.8 7.2-16 16-16h48c8.8 0 16 7.2 16 16s-7.2 16-16 16H448v32h32c8.8 0 16 7.2 16 16s-7.2 16-16 16H448v48c0 8.8-7.2 16-16 16s-16-7.2-16-16V432 368z"/></svg></div>
<div style="position:absolute;left:1084.1px;top:446.15px"><svg width="13.5" height="18" viewBox="0 0 384 512" style="display:block"><path fill="#f0a00c" d="M64 0C28.7 0 0 28.7 0 64V448c0 35.3 28.7 64 64 64H320c35.3 0 64-28.7 64-64V160H256c-17.7 0-32-14.3-32-32V0H64zM256 0V128H384L256 0zM153 289l-31 31 31 31c9.4 9.4 9.4 24.6 0 33.9s-24.6 9.4-33.9 0L71 337c-9.4-9.4-9.4-24.6 0-33.9l48-48c9.4-9.4 24.6-9.4 33.9 0s9.4 24.6 0 33.9zM265 255l48 48c9.4 9.4 9.4 24.6 0 33.9l-48 48c-9.4 9.4-24.6 9.4-33.9 0s-9.4-24.6 0-33.9l31-31-31-31c-9.4-9.4-9.4-24.6 0-33.9s24.6-9.4 33.9 0z"/></svg></div>
<div class="t" style="left:58.5px;top:490.57px;font-size:12.5px;color:#111;font-weight:normal;">July 27, 2025</div>
<div class="t" style="left:200.7px;top:490.57px;font-size:12.5px;color:#111;font-weight:normal;">4</div>
<div class="t" style="left:293px;top:490.57px;font-size:12.5px;color:#111;font-weight:normal;">Statement of changes in beneficial ownership of securities</div>
<div class="t" style="left:857.8px;top:490.57px;font-size:12.5px;color:#111;font-weight:normal;">Insider Transactions</div>
<div style="position:absolute;left:1060.8px;top:487.60px"><svg width="18" height="18" viewBox="0 0 512 512" style="display:block"><path fill="#f0a00c" d="M0 64C0 28.7 28.7 0 64 0H224V128c0 17.7 14.3 32 32 32H384V304H176c-35.3 0-64 28.7-64 64V512H64c-35.3 0-64-28.7-64-64V64zM384 128H256V0L384 128zM176 352h32c30.9 0 56 25.1 56 56s-25.1 56-56 56H192v32c0 8.8-7.2 16-16 16s-16-7.2-16-16V448 368c0-8.8 7.2-16 16-16zm32 80c13.3 0 24-10.7 24-24s-10.7-24-24-24H192v48h16zm96-80h32c26.5 0 48 21.5 48 48v64c0 26.5-21.5 48-48 48H304c-8.8 0-16-7.2-16-16V368c0-8.8 7.2-16 16-16zm32 128c8.8 0 16-7.2 16-16V400c0-8.8-7.2-16-16-16H320v96h16zm80-112c0-8.8 7.2-16 16-16h48c8.8 0 16 7.2 16 16s-7.2 16-16 16H448v32h32c8.8 0 16 7.2 16 16s-7.2 16-16 16H448v48c0 8.8-7.2 16-16 16s-16-7.2-16-16V432 368z"/></svg></div>
<div style="position:absolute;left:1084.1px;top:487.60px"><svg width="13.5" height="18" viewBox="0 0 384 512" style="display:block"><path fill="#f0a00c" d="M64 0C28.7 0 0 28.7 0 64V448c0 35.3 28.7 64 64 64H320c35.3 0 64-28.7 64-64V160H256c-17.7 0-32-14.3-32-32V0H64zM256 0V128H384L256 0zM153 289l-31 31 31 31c9.4 9.4 9.4 24.6 0 33.9s-24.6 9.4-33.9 0L71 337c-9.4-9.4-9.4-24.6 0-33.9l48-48c9.4-9.4 24.6-9.4 33.9 0s9.4 24.6 0 33.9zM265 255l48 48c9.4 9.4 9.4 24.6 0 33.9l-48 48c-9.4 9.4-24.6 9.4-33.9 0s-9.4-24.6 0-33.9l31-31-31-31c-9.4-9.4-9.4-24.6 0-33.9s24.6-9.4 33.9 0z"/></svg></div>
<div class="t" style="left:58.5px;top:531.77px;font-size:12.5px;color:#111;font-weight:normal;">July 27, 2025</div>
<div class="t" style="left:200.7px;top:531.77px;font-size:12.5px;color:#111;font-weight:normal;">4</div>
<div class="t" style="left:293px;top:531.77px;font-size:12.5px;color:#111;font-weight:normal;">Statement of changes in beneficial ownership of securities</div>
<div class="t" style="left:857.8px;top:531.77px;font-size:12.5px;color:#111;font-weight:normal;">Insider Transactions</div>
<div style="position:absolute;left:1060.8px;top:528.80px"><svg width="18" height="18" viewBox="0 0 512 512" style="display:block"><path fill="#f0a00c" d="M0 64C0 28.7 28.7 0 64 0H224V128c0 17.7 14.3 32 32 32H384V304H176c-35.3 0-64 28.7-64 64V512H64c-35.3 0-64-28.7-64-64V64zM384 128H256V0L384 128zM176 352h32c30.9 0 56 25.1 56 56s-25.1 56-56 56H192v32c0 8.8-7.2 16-16 16s-16-7.2-16-16V448 368c0-8.8 7.2-16 16-16zm32 80c13.3 0 24-10.7 24-24s-10.7-24-24-24H192v48h16zm96-80h32c26.5 0 48 21.5 48 48v64c0 26.5-21.5 48-48 48H304c-8.8 0-16-7.2-16-16V368c0-8.8 7.2-16 16-16zm32 128c8.8 0 16-7.2 16-16V400c0-8.8-7.2-16-16-16H320v96h16zm80-112c0-8.8 7.2-16 16-16h48c8.8 0 16 7.2 16 16s-7.2 16-16 16H448v32h32c8.8 0 16 7.2 16 16s-7.2 16-16 16H448v48c0 8.8-7.2 16-16 16s-16-7.2-16-16V432 368z"/></svg></div>
<div style="position:absolute;left:1084.1px;top:528.80px"><svg width="13.5" height="18" viewBox="0 0 384 512" style="display:block"><path fill="#f0a00c" d="M64 0C28.7 0 0 28.7 0 64V448c0 35.3 28.7 64 64 64H320c35.3 0 64-28.7 64-64V160H256c-17.7 0-32-14.3-32-32V0H64zM256 0V128H384L256 0zM153 289l-31 31 31 31c9.4 9.4 9.4 24.6 0 33.9s-24.6 9.4-33.9 0L71 337c-9.4-9.4-9.4-24.6 0-33.9l48-48c9.4-9.4 24.6-9.4 33.9 0s9.4 24.6 0 33.9zM265 255l48 48c9.4 9.4 9.4 24.6 0 33.9l-48 48c-9.4 9.4-24.6 9.4-33.9 0s-9.4-24.6 0-33.9l31-31-31-31c-9.4-9.4-9.4-24.6 0-33.9s24.6-9.4 33.9 0z"/></svg></div>
<div class="t" style="left:662.6px;top:575.39px;font-size:12.3px;color:#285f88;font-weight:normal;">Showing 1-10 out of 1374 records</div>
<div class="pg" style="left:865px;top:567.8px;width:34.7px;border:1px solid #eceef0;color:#cfd2d5;background:#f8f9fa">First</div>
<div class="pg" style="left:905.4px;top:567.8px;width:34.6px;border:1px solid #eceef0;color:#cfd2d5;background:#f8f9fa">Prev</div>
<div class="pg" style="left:946.4px;top:567.8px;width:24.1px;border:1px solid #eceef0;color:#cfd2d5;background:#f8f9fa">1</div>
<div class="pg" style="left:976px;top:567.8px;width:24.5px;border:1px solid #8fb0c3;color:#1b4f82;background:#fff">2</div>
<div class="pg" style="left:1006.5999999999999px;top:567.8px;width:24.0px;border:1px solid #8fb0c3;color:#1b4f82;background:#fff">3</div>
<div class="pg" style="left:1036.6px;top:567.8px;width:24.4px;border:1px solid #8fb0c3;color:#1b4f82;background:#fff">4</div>
<div class="pg" style="left:1067px;top:567.8px;width:24.5px;border:1px solid #8fb0c3;color:#1b4f82;background:#fff">5</div>
<div class="pg" style="left:1097px;top:567.8px;width:30.0px;border:1px solid #8fb0c3;color:#1b4f82;background:#fff">138</div>
<div class="pg" style="left:1133px;top:567.8px;width:34.8px;border:1px solid #8fb0c3;color:#1b4f82;background:#fff">Next</div>
<div class="pg" style="left:1173.8px;top:567.8px;width:33.2px;border:1px solid #8fb0c3;color:#1b4f82;background:#fff">Last</div>
<div class="t" style="left:48px;top:615.66px;font-size:11.15px;color:#111;font-weight:normal;">Powered by <span style="color:#175591">Kaleidoscope</span></div>
</div>
</div>
</body></html>
